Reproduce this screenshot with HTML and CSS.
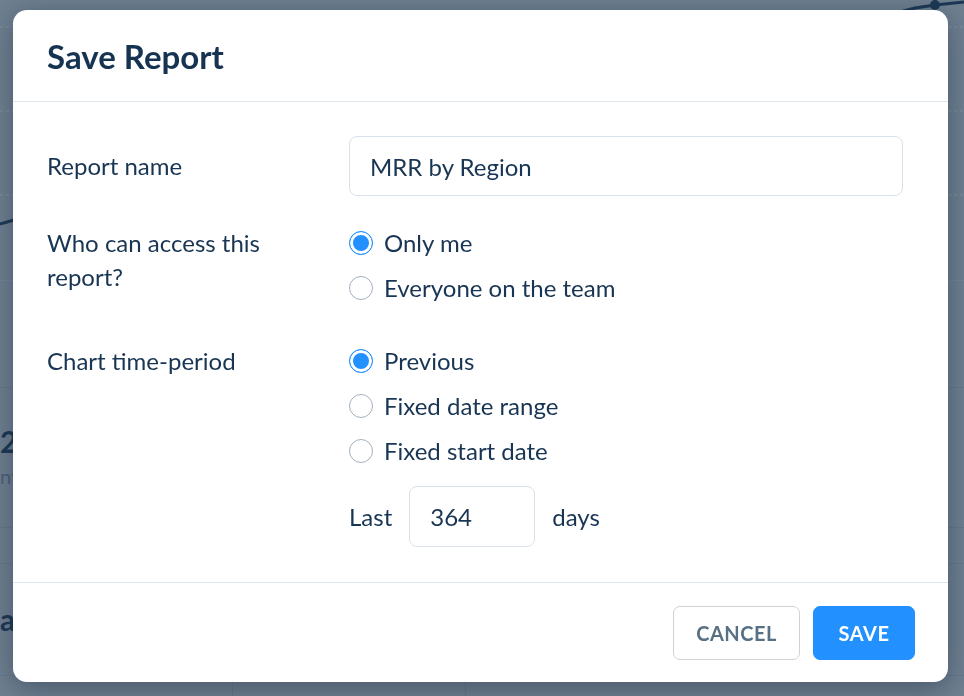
FILE: index.html
```html
<!DOCTYPE html>
<html lang="en">
<head>
  <meta charset="UTF-8">
  <meta name="viewport" content="width=device-width, initial-scale=1.0">
  <title>Save Report</title>
  <link rel="stylesheet" href="styles.css">
</head>
<body>
  <!-- page behind the dialog -->
  <div class="page">
    <svg class="chart" width="964" height="280" viewBox="0 0 964 280">
      <line x1="0" y1="27" x2="964" y2="27" class="grid" />
      <line x1="0" y1="111" x2="964" y2="111" class="grid" />
      <line x1="0" y1="195" x2="964" y2="195" class="grid" />
      <polyline points="0,224 14,220 300,160 600,90 915,8 935,5 964,2" class="trend" />
      <circle cx="935" cy="5" r="5" class="dot" />
    </svg>
    <div class="stat-row row-a"></div>
    <div class="stat-row row-b">
      <div class="stat-num">2</div>
      <div class="stat-sub">nt</div>
    </div>
    <div class="stat-row row-c"></div>
    <div class="stat-row row-d">
      <div class="stat-name">a</div>
    </div>
    <div class="stat-foot">
      <div class="stat-cell"></div>
      <div class="stat-cell"></div>
    </div>
  </div>

  <div class="overlay">
    <div class="modal">
      <div class="modal-header">
        <h1>Save Report</h1>
      </div>
      <div class="modal-body">
        <div class="form-row row-name">
          <label for="report-name">Report name</label>
          <input type="text" id="report-name" class="text-input" value="MRR by Region">
        </div>
        <div class="form-row row-access">
          <div class="label">Who can access this<br>report?</div>
          <div class="options">
            <label class="option"><input type="radio" name="access" checked> Only me</label>
            <label class="option"><input type="radio" name="access"> Everyone on the team</label>
          </div>
        </div>
        <div class="form-row row-period">
          <div class="label">Chart time-period</div>
          <div class="options">
            <label class="option"><input type="radio" name="period" checked> Previous</label>
            <label class="option"><input type="radio" name="period"> Fixed date range</label>
            <label class="option"><input type="radio" name="period"> Fixed start date</label>
            <div class="last-days">
              <span>Last</span>
              <input type="text" class="text-input days-input" value="364">
              <span>days</span>
            </div>
          </div>
        </div>
      </div>
      <div class="modal-footer">
        <button class="btn btn-cancel">Cancel</button>
        <button class="btn btn-save">Save</button>
      </div>
    </div>
  </div>
</body>
</html>
```

FILE: styles.css
```css
body {
  margin: 0;
  font-family: Lato, "Open Sans", sans-serif;
  color: #183553;
  background: #6f8091;
  overflow: hidden;
}
.page {
  width: 964px;
  height: 696px;
  overflow: hidden;
  background: #6f8091;
}
.chart {
  display: block;
}
.chart .grid {
  stroke: #8494a3;
  stroke-width: 1;
  stroke-dasharray: 3 3;
}
.chart .trend {
  fill: none;
  stroke: #1d3855;
  stroke-width: 3;
}
.chart .dot {
  fill: #1d3855;
}
.stat-row {
  box-sizing: border-box;
  border-top: 1px solid #66788a;
}
.row-a {
  height: 107px;
  border-top-color: #75869a;
}
.row-b {
  height: 140px;
  padding-top: 36px;
}
.row-c {
  height: 36px;
}
.row-d {
  height: 112px;
  padding-top: 38px;
}
.stat-num {
  font-size: 30px;
  line-height: 34px;
  font-weight: bold;
  color: #1d3855;
}
.stat-sub {
  margin-top: 6px;
  font-size: 20px;
  line-height: 24px;
  color: #4c6177;
}
.stat-name {
  font-size: 30px;
  line-height: 34px;
  font-weight: bold;
  color: #1d3855;
}
.stat-foot {
  display: flex;
  border-top: 1px solid #66788a;
  height: 40px;
}
.stat-cell {
  width: 232px;
  border-right: 1px solid #66788a;
}

.overlay {
  position: fixed;
  inset: 0;
  padding: 10px 16px 14px 13px;
}
.modal {
  width: 935px;
  height: 672px;
  background: #ffffff;
  border-radius: 14px;
  box-shadow: 0 6px 28px rgba(20, 35, 55, 0.45);
  display: flex;
  flex-direction: column;
  overflow: hidden;
}
.modal-header {
  height: 91px;
  border-bottom: 1px solid #dfe5ec;
  padding: 0 34px;
  display: flex;
  align-items: center;
}
.modal-header h1 {
  margin: 0;
  font-size: 33px;
  font-weight: bold;
  color: #163451;
}
.modal-body {
  flex: 1;
  padding: 34px 45px 34px 34px;
}
.form-row {
  display: grid;
  grid-template-columns: 302px 1fr;
  font-size: 24px;
  line-height: 34px;
}
.row-name {
  align-items: center;
  margin-bottom: 30px;
}
.row-access {
  margin-bottom: 39px;
}
.text-input {
  box-sizing: border-box;
  height: 60px;
  border: 1px solid #d9e1ea;
  border-radius: 8px;
  padding: 0 20px;
  font-family: inherit;
  font-size: 24px;
  color: #183553;
  outline: none;
}
.options {
  display: flex;
  flex-direction: column;
  gap: 11px;
}
.option {
  display: flex;
  align-items: center;
  gap: 11px;
  height: 34px;
}
.option input {
  appearance: none;
  -webkit-appearance: none;
  margin: 0;
  width: 24px;
  height: 24px;
  border: 1.5px solid #a3b0bd;
  border-radius: 50%;
  background: #ffffff;
}
.option input:checked {
  border-color: #2290ff;
  background: #2290ff;
  box-shadow: inset 0 0 0 3px #ffffff;
}
.last-days {
  display: flex;
  align-items: center;
  gap: 17px;
  margin-top: 7px;
}
.days-input {
  width: 126px;
  height: 61px;
}
.modal-footer {
  border-top: 1px solid #dfe5ec;
  height: 99px;
  padding: 0 33px;
  display: flex;
  align-items: center;
  justify-content: flex-end;
  gap: 13px;
}
.btn {
  font-family: inherit;
  font-size: 20px;
  font-weight: bold;
  text-transform: uppercase;
  letter-spacing: 0.5px;
  height: 54px;
  border-radius: 7px;
  cursor: pointer;
}
.btn-cancel {
  width: 127px;
  background: #ffffff;
  border: 1px solid #cfd3d8;
  color: #587084;
}
.btn-save {
  width: 102px;
  background: #2291ff;
  border: 1px solid #2291ff;
  color: #ffffff;
}
```
